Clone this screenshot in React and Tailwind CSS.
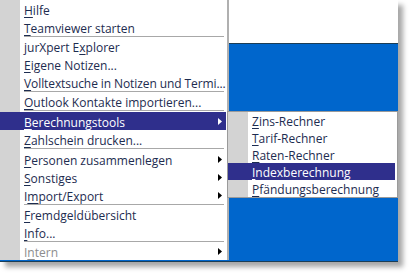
import React from "react";

const txt = "text-[#1d2c50]";

function U({ children }) {
  return <span className="underline decoration-1 underline-offset-[2px]">{children}</span>;
}

function Arrow({ white }) {
  return (
    <svg width="4" height="7" viewBox="0 0 4 7" className="absolute right-[4px] top-[6px]">
      <path d="M0 0 L4 3.5 L0 7 Z" fill={white ? "#ffffff" : "#000000"} />
    </svg>
  );
}

function Item({ children, arrow, active, disabled, tight }) {
  return (
    <div
      className={
        "relative flex h-[18px] items-center overflow-hidden " +
        (active ? "bg-[#2f2f8c] text-white" : disabled ? "text-[#8d8d8d]" : txt)
      }
    >
      {!active && <div className="h-full w-[20px] shrink-0 bg-[#d3d3d3]" />}
      <div
        className={
          "whitespace-nowrap pt-[3px] " +
          (active ? "pl-[24px]" : "pl-[4px]") +
          (tight ? " tracking-[-0.09px]" : "")
        }
      >
        {children}
      </div>
      {arrow && <Arrow white={active} />}
    </div>
  );
}

function Sep({ wide }) {
  return (
    <div className={"flex " + (wide ? "h-[2px]" : "h-[1px]")}>
      <div className="w-[20px] bg-[#d3d3d3]" />
      <div className="ml-[4px] mr-[2px] h-[1px] flex-1 bg-[#a8a8a8]" />
    </div>
  );
}

function SubItem({ children, active }) {
  return (
    <div className={"flex h-[17px] items-center " + (active ? "mr-[2px] bg-[#2f2f8c] text-white" : txt)}>
      {!active && <div className="h-full w-[20px] shrink-0 bg-[#d3d3d3]" />}
      <div className={"whitespace-nowrap pt-[3px] " + (active ? "pl-[24px]" : "pl-[4px]")}>{children}</div>
    </div>
  );
}

export default function App() {
  return (
    <div
      className="relative h-[276px] w-[411px] overflow-hidden bg-white text-[12px] leading-none"
      style={{ fontFamily: '"Open Sans", "Noto Sans", sans-serif' }}
    >
      <div className="relative h-[262px] w-[398px] bg-white shadow-[5px_5px_5px_rgba(0,0,0,0.35)]">
        <div className="flex h-full flex-col">
          <div className="h-[43px]" />
          <div className="flex-1 border-y border-[#1b3d55] bg-[#0066cc]" />
        </div>

        <div className="absolute left-0 top-0 w-[229px] border-r-[2px] border-[#b0b0b0] bg-white pr-[1px]">
          <Item><U>H</U>ilfe</Item>
          <Item><U>T</U>eamviewer starten</Item>
          <Sep />
          <Item>jurXpert E<U>x</U>plorer</Item>
          <Item><U>E</U>igene Notizen...</Item>
          <Item tight><U>V</U>olltextsuche in Notizen und Termi...</Item>
          <Sep />
          <Item><U>O</U>utlook Kontakte importieren...</Item>
          <Sep wide />
          <Item active arrow><U>B</U>erechnungstools</Item>
          <Item><U>Z</U>ahlschein drucken...</Item>
          <Sep wide />
          <Item arrow><U>P</U>ersonen zusammenlegen</Item>
          <Item arrow><U>S</U>onstiges</Item>
          <Item arrow>I<U>m</U>port/Export</Item>
          <Sep />
          <Item><U>F</U>remdgeldübersicht</Item>
          <Item><U>I</U>nfo...</Item>
          <Sep />
          <Item arrow disabled>I<U>n</U>tern</Item>
        </div>

        <div className="absolute left-[227px] top-[111px] w-[171px] border border-[#9a9a9a] bg-white">
          <SubItem><U>Z</U>ins-Rechner</SubItem>
          <SubItem><U>T</U>arif-Rechner</SubItem>
          <SubItem><U>R</U>aten-Rechner</SubItem>
          <SubItem active><U>I</U>ndexberechnung</SubItem>
          <SubItem><U>P</U>fändungsberechnung</SubItem>
        </div>
      </div>
    </div>
  );
}
